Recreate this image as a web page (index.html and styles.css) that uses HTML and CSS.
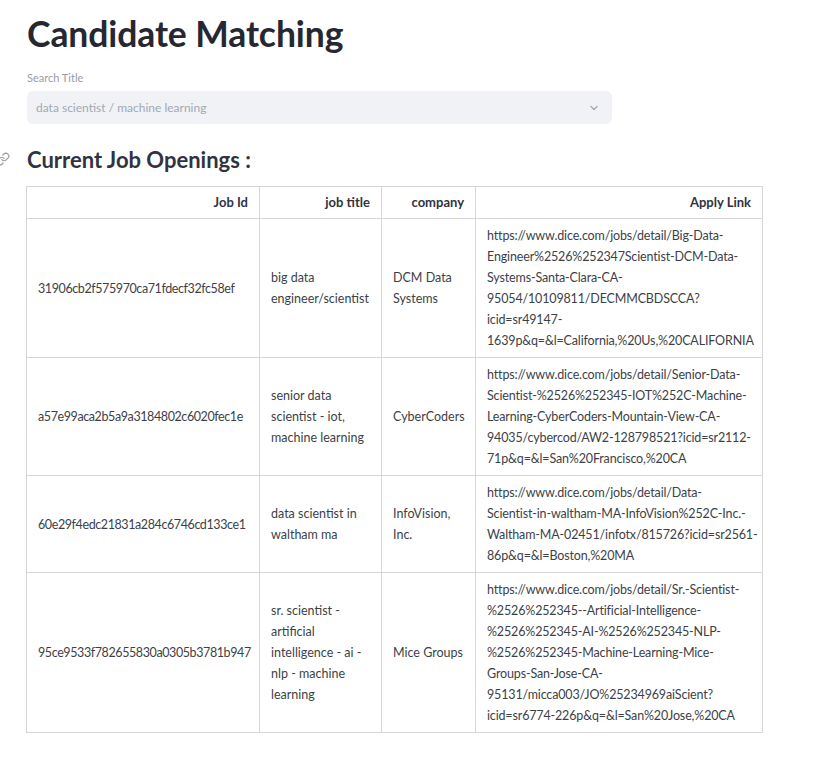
FILE: index.html
```html
<!DOCTYPE html>
<html lang="en">
<head>
<meta charset="utf-8">
<title>Candidate Matching</title>
<link rel="stylesheet" href="styles.css">
</head>
<body>
<main class="app">
  <h1 class="title">Candidate Matching</h1>
  <div class="field">
    <label class="field-label">Search Title</label>
    <div class="select">
      <span class="select-value">data scientist / machine learning</span>
      <svg class="chevron" width="12" height="12" viewBox="0 0 12 12"><path d="M3 4.5 L6 7.5 L9 4.5" fill="none" stroke="#a3a8b4" stroke-width="1.4" stroke-linecap="round" stroke-linejoin="round"/></svg>
    </div>
  </div>
  <h2 class="section">
    <span class="anchor"><svg width="14" height="14" viewBox="0 0 24 24"><path d="M10 13a5 5 0 0 0 7.54.54l3-3a5 5 0 0 0-7.07-7.07l-1.72 1.71" fill="none" stroke="#9a9ca4" stroke-width="2" stroke-linecap="round"/><path d="M14 11a5 5 0 0 0-7.54-.54l-3 3a5 5 0 0 0 7.07 7.07l1.71-1.71" fill="none" stroke="#9a9ca4" stroke-width="2" stroke-linecap="round"/></svg></span>
    Current Job Openings :
  </h2>
  <table class="jobs">
    <colgroup>
      <col class="c-id"><col class="c-title"><col class="c-company"><col class="c-link">
    </colgroup>
    <thead>
      <tr><th>Job Id</th><th>job title</th><th>company</th><th>Apply Link</th></tr>
    </thead>
    <tbody>
      <tr>
        <td class="id">31906cb2f575970ca71fdecf32fc58ef</td>
        <td>big data<br>engineer/scientist</td>
        <td>DCM Data<br>Systems</td>
        <td class="link">https://www.dice.com/jobs/detail/Big-Data-<br>Engineer%2526%252347Scientist-DCM-Data-<br>Systems-Santa-Clara-CA-<br>95054/10109811/DECMMCBDSCCA?<br>icid=sr49147-<br>1639p&amp;q=&amp;l=California,%20Us,%20CALIFORNIA</td>
      </tr>
      <tr>
        <td class="id">a57e99aca2b5a9a3184802c6020fec1e</td>
        <td>senior data<br>scientist - iot,<br>machine learning</td>
        <td>CyberCoders</td>
        <td class="link">https://www.dice.com/jobs/detail/Senior-Data-<br>Scientist-%2526%252345-IOT%252C-Machine-<br>Learning-CyberCoders-Mountain-View-CA-<br>94035/cybercod/AW2-128798521?icid=sr2112-<br>71p&amp;q=&amp;l=San%20Francisco,%20CA</td>
      </tr>
      <tr>
        <td class="id">60e29f4edc21831a284c6746cd133ce1</td>
        <td>data scientist in<br>waltham ma</td>
        <td>InfoVision,<br>Inc.</td>
        <td class="link">https://www.dice.com/jobs/detail/Data-<br>Scientist-in-waltham-MA-InfoVision%252C-Inc.-<br>Waltham-MA-02451/infotx/815726?icid=sr2561-<br>86p&amp;q=&amp;l=Boston,%20MA</td>
      </tr>
      <tr>
        <td class="id">95ce9533f782655830a0305b3781b947</td>
        <td>sr. scientist -<br>artificial<br>intelligence - ai -<br>nlp - machine<br>learning</td>
        <td>Mice Groups</td>
        <td class="link">https://www.dice.com/jobs/detail/Sr.-Scientist-<br>%2526%252345--Artificial-Intelligence-<br>%2526%252345-AI-%2526%252345-NLP-<br>%2526%252345-Machine-Learning-Mice-<br>Groups-San-Jose-CA-<br>95131/micca003/JO%25234969aiScient?<br>icid=sr6774-226p&amp;q=&amp;l=San%20Jose,%20CA</td>
      </tr>
    </tbody>
  </table>
</main>
</body>
</html>
```

FILE: styles.css
```css
* { box-sizing: border-box; }
html, body { margin: 0; padding: 0; background: #ffffff; }
body {
  font-family: "Lato", "Open Sans", sans-serif;
  color: #31333f;
}
.app {
  width: 763px;
  padding: 13px 0 40px 27px;
}
.title {
  margin: 0;
  font-size: 35.5px;
  font-weight: 700;
  line-height: 42px;
  color: #262730;
  letter-spacing: -0.1px;
}
.field {
  margin-top: 16px;
  width: 585px;
}
.field-label {
  display: block;
  font-size: 11px;
  line-height: 14px;
  color: #9a9ca4;
  margin-bottom: 6px;
}
.select {
  display: flex;
  align-items: center;
  justify-content: space-between;
  height: 33px;
  padding: 0 12px 0 9px;
  background: #f0f2f6;
  border-radius: 6px;
}
.select-value {
  font-size: 12px;
  color: #a3a8b4;
}
.chevron { display: block; }
.section {
  position: relative;
  margin: 22px 0 0 0;
  font-size: 22px;
  font-weight: 700;
  line-height: 28px;
  color: #31333f;
}
.anchor {
  position: absolute;
  left: -31px;
  top: 6px;
  line-height: 0;
}
.jobs {
  margin-top: 12px;
  margin-left: -1px;
  width: 736px;
  border-collapse: collapse;
  table-layout: fixed;
  font-size: 12.5px;
  line-height: 21px;
}
.c-id { width: 233px; }
.c-title { width: 122px; }
.c-company { width: 94px; }
.c-link { width: 287px; }
.jobs th, .jobs td {
  border: 1px solid #d6d6d9;
  padding: 6px 11px 6px 11px;
  vertical-align: middle;
  white-space: nowrap;
}
.jobs th {
  text-align: right;
  font-weight: 700;
  color: #31333f;
  font-size: 13px;
  padding-top: 5px;
  padding-bottom: 5px;
}
.jobs td {
  text-align: left;
  color: #3d3f48;
}
.jobs td.id {
  letter-spacing: -0.4px;
}
.jobs td.link {
  letter-spacing: -0.15px;
}
```
